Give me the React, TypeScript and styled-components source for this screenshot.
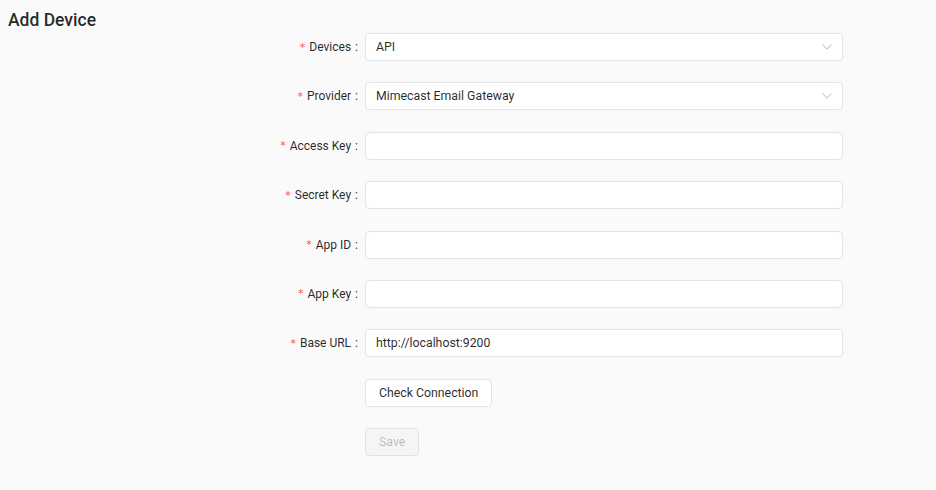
import React, { useState } from "react";
import styled, { createGlobalStyle } from "styled-components";

const GlobalStyle = createGlobalStyle`
  html, body {
    margin: 0;
    padding: 0;
    background: #fafafa;
    font-family: Roboto, "Liberation Sans", Arial, sans-serif;
    color: rgba(0, 0, 0, 0.85);
  }
`;

const Page = styled.div`
  display: flex;
  flex-direction: column;
  min-height: 490px;
`;

const Title = styled.h1`
  margin: 0;
  padding: 8px 8px 0 8px;
  font-size: 17.5px;
  line-height: 25px;
  font-weight: 500;
  color: rgba(0, 0, 0, 0.85);
`;

const Form = styled.form`
  display: grid;
  grid-template-columns: 358px 478px;
  column-gap: 7px;
  row-gap: 21.4px;
`;

const Label = styled.label`
  display: flex;
  align-items: center;
  justify-content: flex-end;
  height: 28px;
  font-size: 12px;
  color: rgba(0, 0, 0, 0.85);
`;

const Star = styled.span`
  color: #ff4d4f;
  font-size: 11px;
  margin-right: 4px;
  font-family: SimSun, "DejaVu Sans", sans-serif;
`;

const Colon = styled.span`
  margin-left: 4px;
`;

const Field = styled.div`
  position: relative;
  display: flex;
  align-items: center;
  height: 28px;
  box-sizing: border-box;
  background: #fff;
  border: 1px solid #e3e3e3;
  border-radius: 4px;
  padding: 0 10px;
  font-size: 12.3px;
  color: rgba(0, 0, 0, 0.85);
`;

const Input = styled.input`
  border: none;
  outline: none;
  background: transparent;
  width: 100%;
  padding: 0;
  font: inherit;
  color: inherit;
`;

const Chevron = styled.svg`
  position: absolute;
  right: 10px;
  top: 50%;
  transform: translateY(-50%);
`;

const Actions = styled.div`
  grid-column: 2;
  display: flex;
`;

const Button = styled.button<{ $disabled?: boolean }>`
  height: 28px;
  box-sizing: border-box;
  padding: 0 13px;
  border: 1px solid #e3e3e3;
  border-radius: 4px;
  background: ${(p) => (p.$disabled ? "#f5f5f5" : "#fff")};
  color: ${(p) => (p.$disabled ? "rgba(0,0,0,0.25)" : "rgba(0,0,0,0.85)")};
  font-family: inherit;
  font-size: 12.3px;
  cursor: ${(p) => (p.$disabled ? "not-allowed" : "pointer")};
`;

const Spacer = styled.div`
  grid-column: 1;
`;

const ChevronIcon = () => (
  <Chevron width="10" height="6" viewBox="0 0 10 6">
    <path d="M0.5 0.5 L5 5.2 L9.5 0.5" fill="none" stroke="#b5b5b5" strokeWidth="1" />
  </Chevron>
);

interface RowProps {
  label: string;
  children: React.ReactNode;
}

const Row = ({ label, children }: RowProps) => (
  <>
    <Label>
      <Star>*</Star>
      {label}
      <Colon>:</Colon>
    </Label>
    {children}
  </>
);

const App = () => {
  const [values, setValues] = useState({
    access: "",
    secret: "",
    appId: "",
    appKey: "",
    baseUrl: "http://localhost:9200",
  });

  const set = (k: keyof typeof values) => (e: React.ChangeEvent<HTMLInputElement>) =>
    setValues({ ...values, [k]: e.target.value });

  return (
    <Page>
      <GlobalStyle />
      <Title>Add Device</Title>
      <Form onSubmit={(e) => e.preventDefault()}>
        <Row label="Devices">
          <Field>
            API
            <ChevronIcon />
          </Field>
        </Row>
        <Row label="Provider">
          <Field>
            Mimecast Email Gateway
            <ChevronIcon />
          </Field>
        </Row>
        <Row label="Access Key">
          <Field>
            <Input value={values.access} onChange={set("access")} />
          </Field>
        </Row>
        <Row label="Secret Key">
          <Field>
            <Input value={values.secret} onChange={set("secret")} />
          </Field>
        </Row>
        <Row label="App ID">
          <Field>
            <Input value={values.appId} onChange={set("appId")} />
          </Field>
        </Row>
        <Row label="App Key">
          <Field>
            <Input value={values.appKey} onChange={set("appKey")} />
          </Field>
        </Row>
        <Row label="Base URL">
          <Field>
            <Input value={values.baseUrl} onChange={set("baseUrl")} />
          </Field>
        </Row>
        <Spacer />
        <Actions>
          <Button type="button">Check Connection</Button>
        </Actions>
        <Spacer />
        <Actions>
          <Button type="button" $disabled disabled>
            Save
          </Button>
        </Actions>
      </Form>
    </Page>
  );
};

export default App;
